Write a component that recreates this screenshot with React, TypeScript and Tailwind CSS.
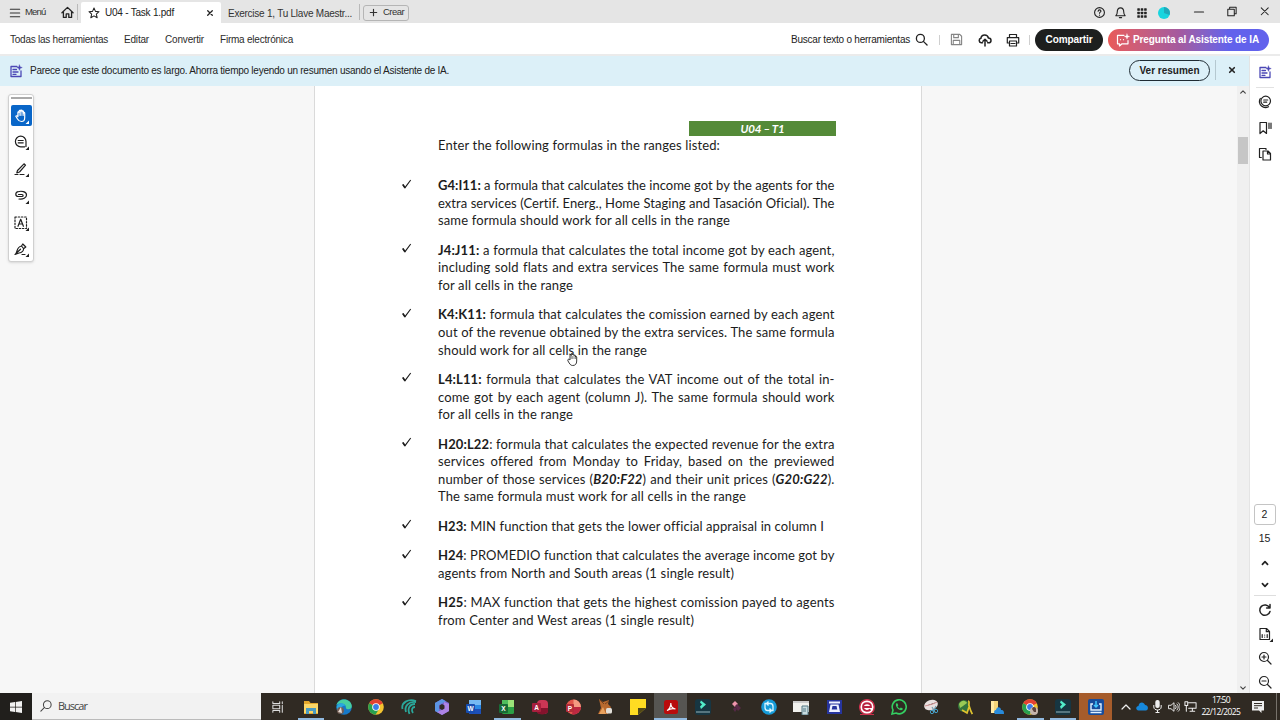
import { useLayoutEffect, useRef, useState } from "react";
import type { ReactNode } from "react";

type Line = { width?: number; content: ReactNode };

const FORMULAS: Line[][] = [
  [
    { content: <><b>G4:I11:</b> a formula that calculates the income got by the agents for the</> },
    { content: "extra services (Certif. Energ., Home Staging and Tasación Oficial). The" },
    { width: 292, content: "same formula should work for all cells in the range" },
  ],
  [
    { content: <><b>J4:J11:</b> a formula that calculates the total income got by each agent,</> },
    { content: "including sold flats and extra services The same formula must work" },
    { width: 135, content: "for all cells in the range" },
  ],
  [
    { content: <><b>K4:K11:</b> formula that calculates the comission earned by each agent</> },
    { content: "out of the revenue obtained by the extra services. The same formula" },
    { width: 209, content: "should work for all cells in the range" },
  ],
  [
    { content: <><b>L4:L11:</b> formula that calculates the VAT income out of the total in-</> },
    { content: "come got by each agent (column J). The same formula should work" },
    { width: 135, content: "for all cells in the range" },
  ],
  [
    { content: <><b>H20:L22</b>: formula that calculates the expected revenue for the extra</> },
    { content: "services offered from Monday to Friday, based on the previewed" },
    { content: <>number of those services (<b><i>B20:F22</i></b>) and their unit prices (<b><i>G20:G22</i></b>).</> },
    { width: 308, content: "The same formula must work for all cells in the range" },
  ],
  [{ width: 386, content: <><b>H23:</b> MIN function that gets the lower official appraisal in column I</> }],
  [
    { content: <><b>H24</b>: PROMEDIO function that calculates the average income got by</> },
    { width: 296, content: "agents from North and South areas (1 single result)" },
  ],
  [
    { content: <><b>H25</b>: MAX function that gets the highest comission payed to agents</> },
    { width: 256, content: "from Center and West areas (1 single result)" },
  ],
];

// Tracks text out (or in) so that it fills exactly `width` pixels.
function Fit({ width, className = "", children }: { width: number; className?: string; children: ReactNode }) {
  const ref = useRef<HTMLSpanElement>(null);
  const [spacing, setSpacing] = useState(0);
  useLayoutEffect(() => {
    const el = ref.current;
    if (!el) return;
    const count = el.textContent?.length ?? 1;
    setSpacing((width - el.getBoundingClientRect().width) / count);
  }, [width]);
  return (
    <span className={`block shrink-0 whitespace-nowrap ${className}`} style={{ width }}>
      <span ref={ref} style={{ letterSpacing: spacing }}>
        {children}
      </span>
    </span>
  );
}

function Icon({ size = 14, sw = 1.2, className = "", children }: { size?: number; sw?: number; className?: string; children: ReactNode }) {
  return (
    <svg
      width={size}
      height={size}
      viewBox="0 0 14 14"
      fill="none"
      stroke="currentColor"
      strokeWidth={sw}
      strokeLinecap="round"
      strokeLinejoin="round"
      className={`shrink-0 ${className}`}
    >
      {children}
    </svg>
  );
}

const CloseIcon = ({ size = 14, sw = 1.3 }: { size?: number; sw?: number }) => (
  <Icon size={size} sw={sw}><path d="M4.7 4.7l4.6 4.6M9.3 4.7L4.7 9.3" /></Icon>
);

const SummaryIcon = () => (
  <Icon className="text-[#4b47b5]" sw={1.3}>
    <path d="M8 2.5H2v10h10V7M4 5.5h3.5M4 8h5M4 10.3h3" />
    <path d="M10.5 1l.7 2 2 .5-2 .8-.7 2-.8-2-1.8-.8 1.8-.5z" fill="currentColor" strokeWidth={0.5} />
  </Icon>
);

function TabBar() {
  return (
    <div className="flex h-[23px] items-center bg-[#e5e5e5] text-[10px] text-[#333]">
      <div className="flex w-[77px] items-center pt-0.5">
        <Icon size={12} className="ml-[9px]" sw={1.2}><path d="M1.5 2.5h11M1.5 7h11M1.5 11.5h11" /></Icon>
        <Fit width={20.5} className="ml-1 text-[9.5px]">Menú</Fit>
        <Icon size={13} className="ml-[15px] text-[#222]" sw={1.4}><path d="M1 7.2L7 1.5l6 5.7M2.6 6v6.3h3V8.5h2.8v3.8h3V6" /></Icon>
      </div>
      <div className="mr-[3px] h-4 w-px bg-[#b9b9b9]" />
      <div className="mt-0.5 flex h-[21px] w-[140px] items-center rounded-t-[2px] bg-white text-[#222]">
        <Icon size={12} className="ml-[7px]" sw={1.2}><path d="M7 1.2l1.7 3.9 4.2.4-3.2 2.8 1 4.2L7 10.3l-3.7 2.2 1-4.2L1.1 5.5l4.2-.4z" /></Icon>
        <Fit width={69} className="ml-[5px]">U04 - Task 1.pdf</Fit>
        <span className="ml-[29px] flex"><CloseIcon /></span>
      </div>
      <Fit width={124} className="ml-[7px] pt-[3px]">Exercise 1, Tu Llave Maestr...</Fit>
      <div className="ml-[7px] h-4 w-px bg-[#b9b9b9]" />
      <div className="ml-[3px] mt-0.5 flex h-4 w-[46px] items-center rounded-[3px] border border-[#b5b5b5]">
        <Icon size={9} className="ml-[5px]" sw={1.8}><path d="M7 2v10M2 7h10" /></Icon>
        <Fit width={21} className="ml-[5px] text-[9.5px]">Crear</Fit>
      </div>
      <div className="ml-auto flex items-center text-[#222]">
        <span className="flex w-[22px] justify-center pt-0.5">
          <Icon size={13} sw={1.2}>
            <circle cx="7" cy="7" r="5.3" />
            <path d="M5.5 5.6c.2-2 3.1-1.8 3 0 0 1-1.5 1.1-1.5 2.2M7 9.8v.1" />
          </Icon>
        </span>
        <span className="flex w-[21px] justify-center pt-0.5">
          <Icon size={13}><path d="M2 10.5c1-.8 1.5-1.8 1.5-4C3.5 3.5 4.8 2 7 2s3.5 1.5 3.5 4.5c0 2.2.5 3.2 1.5 4zM5.8 12.5h2.4" /></Icon>
        </span>
        <span className="flex w-[22px] justify-center pt-0.5">
          <Icon size={12} sw={0}>
            {[1.5, 5.5, 9.5].map((x) => [1.5, 5.5, 9.5].map((y) => <rect key={`${x}-${y}`} x={x} y={y} width="3" height="3" rx=".6" fill="currentColor" />))}
          </Icon>
        </span>
        <span className="flex w-[21px] justify-center pt-0.5">
          <svg width="12" height="12" viewBox="0 0 12 12"><circle cx="6" cy="6" r="6" fill="#18d5df" /><path d="M6 0a6 6 0 0 1 5.5 8L6 6z" fill="#1fa9bb" /></svg>
        </span>
        <span className="ml-2 flex w-[33px] justify-center"><Icon><path d="M2.500 7h9" /></Icon></span>
        <span className="flex w-[33px] justify-center"><Icon size={13} sw={1.1}><path d="M3 4.500h7v7H3zM5 4.500v-2h7v7h-2" /></Icon></span>
        <span className="flex w-8 justify-center"><Icon size={13} sw={1.1}><path d="M3.500 3l7.500 7.500M11 3l-7.500 7.500" /></Icon></span>
      </div>
    </div>
  );
}

function Toolbar() {
  return (
    <div className="flex h-[33px] items-center border-b-2 border-[#ebebeb] bg-white pl-[10px] pt-0.5 text-[10px] text-[#2c2c2c]">
      <Fit width={98}>Todas las herramientas</Fit>
      <Fit width={25} className="ml-4">Editar</Fit>
      <Fit width={39} className="ml-4">Convertir</Fit>
      <Fit width={73} className="ml-4">Firma electrónica</Fit>
      <div className="ml-auto flex items-center text-[#222]">
        <Fit width={119}>Buscar texto o herramientas</Fit>
        <Icon size={13} sw={1.4} className="ml-[5px]"><circle cx="5.8" cy="5.8" r="4.3" /><path d="M9 9l4 4" /></Icon>
        <div className="ml-[11px] h-[10px] w-px bg-[#cfcfcf]" />
        <Icon size={13} className="ml-[10px] text-[#858585]"><path d="M1.5 1.5h9l2 2v9h-11zM4 1.5V5h5V1.5M3.5 12.5V8h7v4.5" /></Icon>
        <Icon size={14} sw={1.5} className="ml-[15px]"><path d="M4.500 9.800H3.200a2.300 2.300 0 0 1-.3-4.500C3.200 3 4.800 2 6.700 2c2 0 3.300 1.200 3.700 3 1.700 0 2.600 1.100 2.600 2.400 0 1.400-1 2.400-2.400 2.400h-1M7 13V6.500M4.900 8.300L7 6.200l2.100 2.100" /></Icon>
        <Icon size={14} className="ml-[14px]"><path d="M3.500 4.500v-3h7v3M3.500 10H1.300V4.600h11.400V10h-2.200M3.500 8h7v5h-7zM5 10.500h4" /></Icon>
        <div className="ml-[9px] h-[10px] w-px bg-[#cfcfcf]" />
        <div className="ml-[5px] flex h-[22px] w-[68px] items-center justify-center rounded-full bg-[#1d1f1e] font-bold text-white">
          <Fit width={47}>Compartir</Fit>
        </div>
        <div className="ml-[5px] mr-[11px] flex h-[22px] w-[161px] items-center rounded-full bg-linear-to-r from-[#e95a58] via-[#a35aa0] via-45% to-[#6262ec] to-75% font-bold text-white">
          <Icon size={14} sw={1.2} className="ml-2">
            <path d="M8 2.3H1.5v8.5h2V13L6 10.800h6V7.500" />
            <path d="M11 .8l.7 2 2 .7-2 .7-.7 2-.7-2-2-.7 2-.7z" fill="currentColor" strokeWidth={0.3} />
            <path d="M4.500 6.500v.2M7.500 6.500v.2" />
          </Icon>
          <Fit width={126} className="ml-[3px]">Pregunta al Asistente de IA</Fit>
        </div>
      </div>
    </div>
  );
}

function SummaryBanner() {
  return (
    <div className="flex h-[30px] shrink-0 items-center bg-[#dcf0f8] pb-[2px] text-[10px] text-[#222]">
      <span className="ml-[9px] mt-[2px] flex"><SummaryIcon /></span>
      <Fit width={419} className="ml-[7px]">Parece que este documento es largo. Ahorra tiempo leyendo un resumen usando el Asistente de IA.</Fit>
      <div className="ml-auto flex h-[21px] w-[81px] items-center justify-center rounded-full border-[1.5px] border-[#1f2b33] font-bold">
        <Fit width={60}>Ver resumen</Fit>
      </div>
      <div className="ml-[5px] h-5 w-px bg-[#b5c8d0]" />
      <span className="ml-[9px] mr-[10px] flex"><CloseIcon sw={1.6} /></span>
    </div>
  );
}

const CORNER = <path d="M15 11.500V15h-3.500z" fill="currentColor" stroke="none" />;

const TOOLS: ReactNode[] = [
  <><path d="M7.5 12.5c-2 0-3-.8-4-2.500L1.800 7.300c.5-.9 1.400-.6 2.100.4V3.500c0-1 1.300-1 1.300 0V2.200c0-1 1.400-1 1.400 0v-.3c0-1 1.400-1 1.400 0v.8c0-1 1.400-1 1.400 0v1.500c0-1 1.300-1 1.300 0v4.500c0 2.500-1.200 3.800-3.200 3.800z" /><path d="M5.200 3.500v3M6.600 2.500v4M8 2.500v4M9.400 3.500v3" strokeWidth=".8" /></>,
  <><path d="M12 11.500v-5A5.300 5.300 0 1 0 6.700 11.800h4" /><path d="M4.200 5.500h5M4.200 7.800h5" /></>,
  <><path d="M3.500 8.500L10 1.800l1.500 1.400L5.500 10l-2.700.8zM1 12.500h3M6 12.500h4" /></>,
  <><path d="M4.500 5.500H8c1.500 0 1.500 2 0 2H4.500C1 7.500 1 3.500 4 2.700c3-.9 8.500-.5 8.500 3.300 0 3-3.500 4.500-7.500 4" /></>,
  <><rect x="1" y="1" width="11.500" height="11.500" strokeDasharray="1.500 1.700" /><path d="M4 10.300l2.700-7 2.700 7M5 8h3.500" /></>,
  <><path d="M1 12.500c1-.5 1.500-1.500 2-3.500.6-3 2.600-4.500 4.500-5L9.500 6.500C10 8.500 8 10.500 5 11zM7.500 4l1.300-2 3 3-2 1.500M3 10.500l3.500-3.300M8 12.500h3" /></>,
];

function QuickTools() {
  return (
    <div className="ml-[8px] mt-[8px] flex h-[168px] w-[26px] flex-col items-center rounded-[3px] border border-[#d0d0d0] bg-white shadow-sm">
      <div className="mb-[6px] mt-[2px] h-[2px] w-[21px] shrink-0 bg-[#aaa]" />
      {TOOLS.map((tool, i) => (
        <div
          key={i}
          className={`mb-[5.8px] flex h-[21px] w-[21px] shrink-0 items-center justify-center rounded-[2px] ${i === 0 ? "bg-[#0966c8] text-white" : "text-[#1f1f1f]"}`}
        >
          <Icon size={14} className="overflow-visible">{tool}{CORNER}</Icon>
        </div>
      ))}
    </div>
  );
}

const BODY_TRACKING = 0.13;

// Justified line of body text; tightens its tracking when the words alone are too wide.
function DocLine({ width = 396.5, content }: Line) {
  const ref = useRef<HTMLSpanElement>(null);
  const [spacing, setSpacing] = useState(BODY_TRACKING);
  useLayoutEffect(() => {
    const el = ref.current;
    if (!el) return;
    const excess = el.getBoundingClientRect().width - width;
    if (excess > 0) setSpacing(BODY_TRACKING - excess / (el.textContent?.length ?? 1));
  }, [width]);
  return (
    <div className="h-[17.6px] whitespace-nowrap leading-[17.6px] [text-align-last:justify]" style={{ width }}>
      <span ref={ref} style={{ letterSpacing: spacing }}>{content}</span>
    </div>
  );
}

function DocumentPage() {
  return (
    <div className="w-[608px] shrink-0 border-x border-[#dadada] bg-white pl-[123px] pt-[35px] font-[Lato,sans-serif] text-[13px] text-[#1c1c1c]">
      <div className="mb-[0.6px] ml-[251px] flex h-[15px] w-[147px] justify-center bg-[#548a38] text-[11.5px] font-bold italic leading-[15px] text-white">
        <Fit width={44}>U04 – T1</Fit>
      </div>
      <DocLine width={282} content="Enter the following formulas in the ranges listed:" />
      <div className="mt-[23px] flex flex-col gap-[11.8px]">
        {FORMULAS.map((lines, i) => (
          <div key={i} className="relative">
            <svg width="10" height="10" viewBox="0 0 10 10" className="absolute -left-[36px] top-[1.5px]">
              <path d="M.8 5.500l2.200 3.200L8.700 1" fill="none" stroke="#1c1c1c" strokeWidth="1.100" />
              <path d="M.8 5.500l2.200 3.200" stroke="#1c1c1c" strokeWidth="1.600" />
            </svg>
            {lines.map((line, j) => <DocLine key={j} {...line} />)}
          </div>
        ))}
      </div>
    </div>
  );
}

function ScrollBar() {
  return (
    <div className="flex w-[12px] shrink-0 flex-col items-center bg-[#f0f0f0] pr-px text-[#444]">
      <Icon size={8} className="mt-[2px]" sw={2}><path d="M3 9l4-4 4 4" /></Icon>
      <div className="mt-[41px] h-[27px] w-[10px] bg-[#c6c6c6]" />
      <Icon size={8} className="mb-[1px] mt-auto" sw={2}><path d="M3 5l4 4 4-4" /></Icon>
    </div>
  );
}

function RightRail() {
  return (
    <div className="flex w-[31px] shrink-0 flex-col items-center border-l border-[#e4e4e4] bg-white pr-px text-[#222]">
      <div className="flex h-[31px] items-center"><SummaryIcon /></div>
      <div className="h-px w-[18px] bg-[#e2e2e2]" />
      <div className="mt-[7px] flex flex-col gap-[12px]">
        <Icon><circle cx="7.7" cy="6" r="4.800" /><path d="M5.700 5h4M5.700 7.200h3M2.300 3.500C.6 6 1.500 9.500 3.500 11c2 1.800 5 1.800 7 .7" /></Icon>
        <Icon><path d="M2 1.500h6.500v11L5.200 9.800 2 12.500zM11 2v5.500M13 2v5.500" /></Icon>
        <Icon><path d="M5 4h5l2.500 2.500V13H5zM9.500 4v3h3M3.300 10.500H1.500v-9H8v1" /></Icon>
      </div>
      <div className="mt-auto flex flex-col items-center pb-[4px] text-[10.5px]">
        <div className="flex h-[21px] w-[22px] items-center justify-center rounded-[3px] border border-[#c4c4c4]">2</div>
        <div className="mt-[5px] leading-[16px]">15</div>
        <Icon size={12} sw={2} className="mt-[11px]"><path d="M4 8.500l3-3 3 3" /></Icon>
        <Icon size={12} sw={2} className="mt-[10px]"><path d="M4 5.500l3 3 3-3" /></Icon>
        <div className="mt-[4px] h-px w-[22px] bg-[#dedede]" />
        <Icon size={14} sw={1.5} className="mt-[7px]"><path d="M11.500 4.500A5.200 5.200 0 1 0 12 8.500M12 1.500v3.400H8.600" /></Icon>
        <Icon size={14} className="mt-[10px] overflow-visible"><path d="M2 1.500h6.500l3 3v8H2zM8.300 1.500v3.200h3.200M4.200 7.500v3M9.200 7.500v3M6.700 8v.1M6.700 10v.1" />{CORNER}</Icon>
        <Icon size={14} className="mt-[10px]"><circle cx="6" cy="6" r="4.500" /><path d="M9.500 9.500l3.500 3.500M4 6h4M6 4v4" /></Icon>
        <Icon size={14} className="mt-[10px]"><circle cx="6" cy="6" r="4.500" /><path d="M9.500 9.500l3.500 3.500M4 6h4" /></Icon>
      </div>
    </div>
  );
}

// Small latin mark on an app tile, e.g. the W on Word.
function Letter({ x = 6, y = 11, size = 6.5, children }: { x?: number; y?: number; size?: number; children: string }) {
  return (
    <text x={x} y={y} fontSize={size} fontWeight="700" fill="#fff" textAnchor="middle" fontFamily="Liberation Sans, sans-serif">
      {children}
    </text>
  );
}

const CHROME = (
  <>
    <circle cx="8" cy="8" r="7.8" fill="#f4c430" />
    <path d="M8 8L1.200 4.200A7.800 7.800 0 0 1 14.800 4.200z" fill="#e34133" />
    <path d="M8 8L1.200 4.200A7.800 7.800 0 0 0 7.500 15.800L11 10z" fill="#28a050" />
    <circle cx="8" cy="8" r="3.8" fill="#fff" />
    <circle cx="8" cy="8" r="2.9" fill="#3b7de8" />
  </>
);

const FILMORA = (
  <>
    <rect width="16" height="16" rx="3" fill="#173642" />
    <path d="M6 1.500l5 4-5 4.500-1-2.500 2-2-2-2z" fill="#52ecca" />
    <path d="M1 13h14" stroke="#6e8b95" strokeWidth="1.500" />
  </>
);

const APPS: { name: string; state?: "open" | "active" | "alert"; art: ReactNode }[] = [
  { name: "Explorer", state: "open", art: <><path d="M1 2h5l1.500 2H15v11H1z" fill="#e4a82c" /><path d="M1 5h14v9H1z" fill="#fbd768" /><path d="M3 15V9h10v6h-3v-3H6v3z" fill="#4b9cc2" /></> },
  { name: "Edge", art: <><circle cx="8" cy="8" r="7.800" fill="#1679c9" /><path d="M.4 6C3-2 15-1 15.800 7c0 4-5 4-6 2 1-4-5-6-9.400-3z" fill="#47cfa0" /><path d="M1 7c2-4 8-3 8 0-3-1-5 3-2 6-3 1-7-2-6-6z" fill="#2aa7df" /><circle cx="4.500" cy="11.500" r="3.500" fill="#745e55" /><path d="M2 13l3-5 1 6z" fill="#e7dbd3" /></> },
  { name: "Chrome", art: CHROME },
  { name: "Waves", art: <g fill="none" stroke="#2aa79a" strokeWidth="1.800"><path d="M15 2C7-1 0 4 1.500 10" /><path d="M15 3C8 2 3 7 5 13" /><path d="M14 5C9 5 6 9 8.500 15" /><path d="M14 8c-3 0-4 3-2 6" /></g> },
  { name: "Microsoft 365", art: <><path d="M8 0l7 4v8l-7 4-7-4V4z" fill="#7866d0" /><path d="M8 0L1 4v8l4 2V6l7-3.700z" fill="#5c95e4" /><path d="M15 5v7l-7 4-5-3 7-3V3z" fill="#ad83e5" /><path d="M8 5l2.500 1.500v3L8 11 5.500 9.500v-3z" fill="#302b26" /></> },
  { name: "Word", art: <><rect x="3" y="1" width="12" height="14" rx="1.500" fill="#2b89e5" /><path d="M3 1h12v5H3z" fill="#75b9f3" /><path d="M3 10h12v5H3z" fill="#1c4fb8" /><rect y="5" width="9" height="9" rx="1" fill="#174db0" /><Letter x={4.5} y={12}>W</Letter></> },
  { name: "Excel", state: "open", art: <><rect x="3" y="1" width="12" height="14" rx="1.500" fill="#2b9f45" /><path d="M9 1h6v7H9z" fill="#9be278" /><path d="M3 1h6v5H3z" fill="#4fbe5c" /><rect y="5" width="9" height="9" rx="1" fill="#176b36" /><Letter x={4.5} y={12}>X</Letter></> },
  { name: "Access", art: <><rect x="5" y="1" width="11" height="14" rx="4" fill="#cb3655" /><path d="M5 9h11v4c-2 3-8 3-11 1z" fill="#84132d" /><rect y="4" width="9" height="9" rx="1" fill="#a81f3d" /><Letter x={4.5}>A</Letter></> },
  { name: "PowerPoint", art: <><circle cx="8.500" cy="8" r="7.500" fill="#e2574c" /><path d="M8.500.5A7.500 7.500 0 0 1 16 8H8.500z" fill="#f49b82" /><path d="M8.500 8H16a7.500 7.500 0 0 1-9 7.300z" fill="#bd2841" /><rect x="1" y="5" width="8" height="8" rx="1" fill="#b32c37" /><Letter x={5} y={11.5}>P</Letter></> },
  { name: "Fox", art: <><path d="M2 0l4 3 6-2-1 4 3 3-3 7H1l3-6z" fill="#b8692e" /><path d="M6 8l-4 7h7z" fill="#e9a25e" /><path d="M3 1l4 4M8 5l4-3" stroke="#74421f" /><rect x="9" y="9" width="6" height="5.500" rx="1.500" fill="#e2dfd9" /></> },
  { name: "Sticky Notes", art: <><path d="M0 0h16v16H0z" fill="#ffdc22" /><path d="M8 16V9h8z" fill="#514817" /><path d="M8 16l8-7v7z" fill="#302a23" /></> },
  { name: "Acrobat", state: "active", art: <><rect x="1" y="1" width="14" height="14" rx="2.500" fill="#b90b0c" /><path d="M4 11.500c2-.5 4-4 3.800-7.500 0 3 2 5.500 4.700 6-3-1-6 0-8.500 1.500z" fill="none" stroke="#fff" strokeWidth="1.100" /></> },
  { name: "Filmora", art: FILMORA },
  { name: "DaVinci", art: <><path d="M4 5l3-3 3 3-3 3z" fill="#ee94ac" /><path d="M7 7l2-2 4 4-3 3z" fill="#592947" /><path d="M5 10l2-2 2 2-2 3z" fill="#562948" /></> },
  { name: "Sync", art: <><circle cx="8" cy="8" r="7.800" fill="#159bd8" /><path d="M4 9V4.500h5.500c2 0 2.500 1.500 2.500 3M12 7v4.500H6.500C4.500 11.500 4 10 4 8.500M7.500 6.500l-2-2 2-2M8.500 13.500l2-2-2-2" fill="none" stroke="#d9f5ff" strokeWidth="1.300" /></> },
  { name: "Window", art: <><path d="M0 2h16v11H0z" fill="#f1f1ed" /><path d="M0 2h16v2H0z" fill="#ccc" /><path d="M9 7h6v9H9z" fill="#c9dce0" stroke="#557984" /><path d="M10 10h3M10 12h3" stroke="#557984" /></> },
  { name: "Scanner", art: <><rect x="1" y="1" width="15" height="14" fill="#27359e" /><path d="M3 2.500h11v2H3zM4.500 5.500h8l1.500 7.500H3z" fill="#eff2ff" /><path d="M6.500 7h4l.8 3.500H5.700z" fill="#27359e" /></> },
  { name: "eLearning", art: <><circle cx="8" cy="8" r="7.300" fill="#fff" stroke="#c92f4a" strokeWidth="1.500" /><path d="M4 8h8c0-5-8-5-8 0 0 4 5 5 7.500 2.500" fill="none" stroke="#ba2341" strokeWidth="1.800" /><path d="M1 15.500h14" stroke="#c92f4a" /></> },
  { name: "WhatsApp", art: <><path d="M1 15l1-4A7 7 0 1 1 5 14z" fill="none" stroke="#34ce61" strokeWidth="1.600" /><path d="M5 4.500l1.300-.3 1 2-.8 1c.5 1.200 1.300 1.800 2.300 2.300l1-1 2 1-.3 1.200C9 12.500 4 8.500 5 4.500z" fill="#34ce61" /></> },
  { name: "Snip", art: <><ellipse cx="7" cy="6" rx="7" ry="5" fill="#e9e0e0" transform="rotate(-20 7 6)" /><path d="M1 7c4-1 9-2 12-4" stroke="#d69292" /><path d="M8 8l3 5M12 7l-3 6" stroke="#769eb1" strokeWidth="1.200" /><circle cx="8" cy="13" r="1.700" fill="none" stroke="#469fc5" /><circle cx="12" cy="12" r="1.700" fill="none" stroke="#469fc5" /></> },
  { name: "Globe", art: <><circle cx="7" cy="7" r="6" fill="#33743c" /><path d="M2 5c3-5 7-3 8-1L6 7l-3 2z" fill="#99ca55" /><path d="M11 2c1.500 0 1 2 .8 4l2 6 1.500 3M5 11l5 3 2-6" stroke="#dec32f" strokeWidth="1.700" fill="none" /></> },
  { name: "Cloud folder", art: <><path d="M2 2h7v12H2z" fill="#f3d479" /><path d="M2 2h3v12H2z" fill="#ffe9a4" /><path d="M6 15c-2-3 0-4 1-4 1-4 5-3 5 0 3 0 3 2 3 4z" fill="#288bdb" /></> },
  { name: "Chrome profile", state: "open", art: <>{CHROME}<circle cx="12" cy="12" r="4" fill="#c6b4ab" /><path d="M10 10c1-3 4-2 4 0v3h-2z" fill="#5d433d" /></> },
  { name: "Filmora project", state: "open", art: FILMORA },
  { name: "Recorder", state: "alert", art: <><rect width="16" height="16" rx="2" fill="#174c9b" /><path d="M5 5H3v6h10V5h-2M2.500 13.500h11" fill="none" stroke="#e3f2ff" strokeWidth="1.400" /><path d="M8 2v6M6 6l2 2 2-2" fill="none" stroke="#43c9ff" strokeWidth="1.500" /></> },
];

function Taskbar() {
  return (
    <div className="flex h-[27px] shrink-0 items-stretch bg-[#302a23] font-['Open_Sans',sans-serif] text-white">
      <div className="flex w-8 items-center justify-center bg-[#211f1c]">
        <svg width="12" height="12" viewBox="0 0 12 12"><path d="M0 1.700l5-.7v4.700H0zM5.700.9L12 0v5.700H5.700zM0 6.400h5V11l-5-.7zM5.700 6.400H12V12l-6.300-.9z" fill="#f2f2f2" /></svg>
      </div>
      <div className="flex w-[229px] items-center border-b border-[#bbb] bg-[#f2f2f2] text-[11px] text-[#444]">
        <Icon size={12} sw={1.2} className="ml-[8px]"><circle cx="8.500" cy="5.500" r="4.500" /><path d="M5.300 8.700L1 13" /></Icon>
        <Fit width={29} className="ml-[6px] pt-px">Buscar</Fit>
      </div>
      <div className="flex w-[33.7px] items-center justify-center text-[#ddd]">
        <Icon size={12}><path d="M1 1v2h8V1M1 13v-2h8v2M1 5h8v4H1zM12 1v2M12 5v8" /></Icon>
      </div>
      {APPS.map(({ name, state, art }) => (
        <div
          key={name}
          className={`relative flex w-[32.7px] shrink-0 items-center justify-center ${state === "active" ? "bg-[#565552]" : state === "alert" ? "bg-[#a65c2b]" : ""}`}
        >
          <svg width="16" height="16" viewBox="0 0 16 16" aria-label={name}>{art}</svg>
          {(state === "open" || state === "active") && (
            <span className={`absolute bottom-0 h-[2px] bg-[#91b9df] ${state === "active" ? "inset-x-0" : "inset-x-[3px]"}`} />
          )}
        </div>
      ))}
      <div className="ml-[7px] flex items-center text-[#eee]">
        <Icon size={14} sw={1.2}><path d="M3 9l4-4 4 4" /></Icon>
        <svg width="12" height="9" viewBox="0 0 12 9" className="ml-[3px]"><path d="M2.500 8.500C-1 8 0 4 2.500 4 3-.5 8-.5 9 3c3.500 0 4 5 .8 5.500z" fill="#1688dc" /></svg>
        <svg width="9" height="13" viewBox="0 0 9 13" className="ml-[5px]"><rect x="2.300" y="0" width="4.400" height="8" rx="2" fill="#eee" /><path d="M.8 5v2c0 4 7.400 4 7.400 0V5M4.500 10v2.500M2.500 12.500h4" stroke="#eee" fill="none" /></svg>
        <Icon size={12} sw={1.1} className="ml-[6px]"><path d="M1 5h2.500L7 2v10L3.500 9H1zM8.800 5c1 1 1 3 0 4M10.500 3.500c2 2 2 5 0 7M12 2c3 3 3 7 0 10" /></Icon>
        <Icon size={13} sw={1.1} className="ml-[4px]"><path d="M5 3h8v6H5M9 9v3M6.500 12h5M1 2h3v4H1zM2.500 6v6" /></Icon>
      </div>
      <div className="ml-[3px] mt-[1px] flex w-[42px] flex-col items-center text-[8.5px] leading-[12px] text-white">
        <Fit width={18}>17:50</Fit>
        <Fit width={39}>22/12/2025</Fit>
      </div>
      <div className="ml-[10px] flex items-center">
        <svg width="12" height="12" viewBox="0 0 12 12"><path d="M0 0h12v9.500H9.500V12L7 9.500H0z" fill="#eee" /><path d="M2 2.500h8M2 4.700h8M2 7h4" stroke="#302a23" /></svg>
      </div>
      <div className="ml-auto mr-[3px] w-px bg-[#77726b]" />
    </div>
  );
}

export default function App() {
  return (
    <div className="relative flex h-[720px] w-[1280px] flex-col overflow-hidden bg-[#f7f7f7] font-['Liberation_Sans',sans-serif]">
      <TabBar />
      <Toolbar />
      <div className="flex min-h-0 flex-1">
        <div className="flex min-w-0 flex-1 flex-col">
          <SummaryBanner />
          <div className="flex min-h-0 flex-1 overflow-hidden">
            <div className="w-[314px] shrink-0"><QuickTools /></div>
            <DocumentPage />
            <div className="flex-1" />
            <ScrollBar />
          </div>
        </div>
        <RightRail />
      </div>
      <Taskbar />
      {/* Hand tool cursor */}
      <svg width="11" height="14" viewBox="0 0 11 14" className="absolute left-[567px] top-[352px]">
        <path d="M3 8V3.500c0-1 1.300-1 1.300 0V2c0-1 1.400-1 1.400 0v1c0-1 1.400-1 1.400 0v.8c0-1 1.400-1 1.400 0V5c0-.8 1.200-.8 1.200 0v4c0 3-1.500 4.500-4 4.500-2.200 0-3-1.500-4.700-4.500C.2 7.500 1.500 6.500 3 8z" fill="#fff" stroke="#222" strokeWidth=".9" />
        <path d="M4.300 4v3M5.700 4v3M7.100 4v3M8.500 5v2" stroke="#444" strokeWidth=".6" />
      </svg>
    </div>
  );
}
